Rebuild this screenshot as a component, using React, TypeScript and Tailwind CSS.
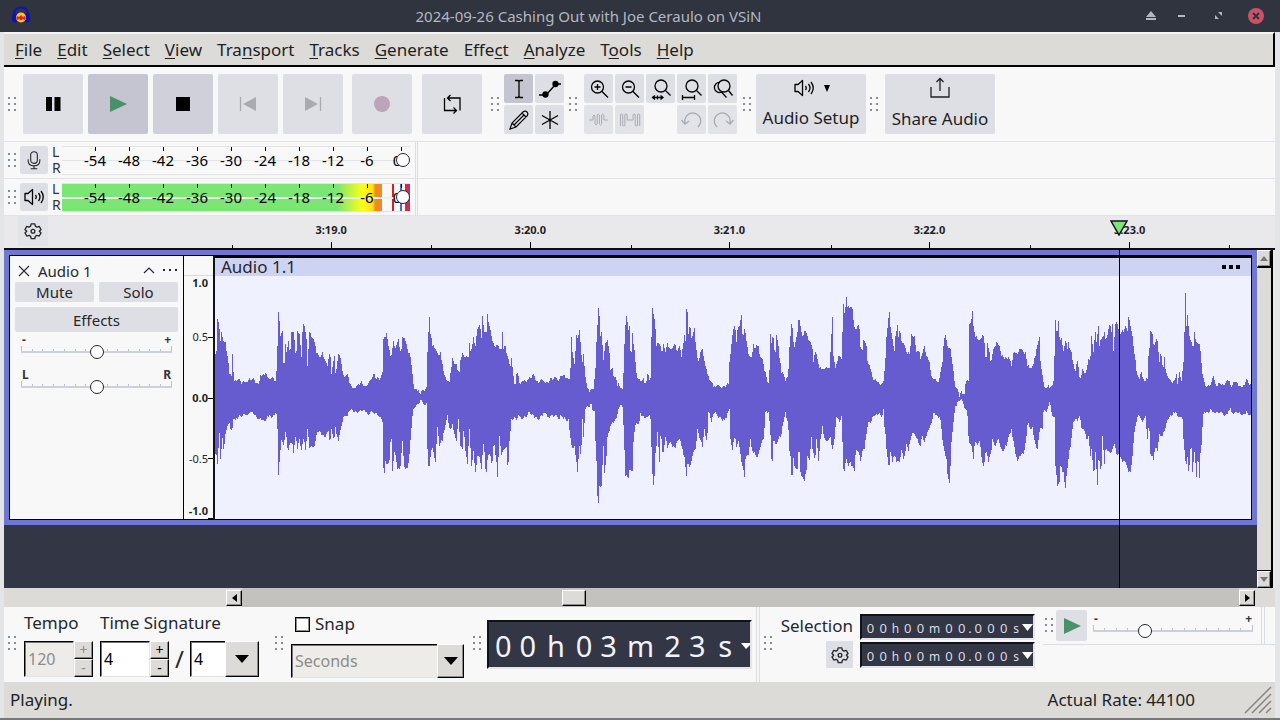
import type { ReactNode } from "react";

type Section = { x: number; y: number; top: string; bottom: string };

// Peak outlines of the clip, three units to a pixel.
const sections: Section[] = [
  {
    x: 0,
    y: 0,
    top: "14,235 18,340 22,210 28,240 32,275 35,250 40,275 46,280 52,320 58,375 64,382 67,315 70,370 74,395 85,390 95,405 108,398 120,388 135,396 145,405 152,378 165,380 168,365 171,382 185,388 198,395 202,290 206,190 209,215 212,260 217,245 222,360 226,285 230,308 236,275 240,310 245,250 252,250 258,328 262,245 268,255 275,325 277,250 282,222 288,255 293,350 298,250 305,265 312,270 320,312 330,325 337,310 345,330 352,350 360,312 365,375 373,320 378,380 385,315 390,320 396,358 405,385 412,375 420,405 432,415 445,405 455,395 465,410 480,398 490,375 500,390 512,388 517,370 519,272 530,253 536,290 543,328 550,275 557,298 565,270 573,308 578,265 585,268 592,300 600,312 606,360 612,420 622,425 632,435 640,422 649,415 651,330 655,250 657,185 661,255 667,290 675,300 685,318 692,310 698,345 705,380 718,398 724,355 727,328 733,345 740,345 748,370 753,328 758,312 775,325 778,282 783,310 790,265 797,290 803,240 810,228 814,268 818,200 824,250 829,250 832,195 838,232 845,260 855,295 865,290 874,300 877,250 880,300 887,290 895,330 902,350 905,328 910,380 915,410 920,375 926,380 930,408 940,395 955,390 968,378 980,395 1000,395 1012,398 1025,388 1050,390",
    bottom: "14,640 18,608 22,645 28,552 32,630 37,568 42,605 48,545 58,522 66,545 70,510 80,508 90,498 105,498 120,490 135,500 150,508 160,512 175,505 190,498 200,495 203,540 206,678 211,602 216,570 222,590 228,540 234,612 240,580 246,578 251,612 256,565 262,600 268,570 274,602 280,570 286,602 292,540 298,597 306,590 315,590 322,548 332,550 345,565 355,545 360,577 365,540 372,570 377,535 386,577 393,540 402,495 412,500 420,485 435,488 455,485 470,490 490,492 505,500 517,518 522,680 527,635 533,645 540,630 543,538 547,665 555,605 562,660 572,650 577,575 583,655 594,658 600,600 607,500 612,475 622,465 632,452 640,465 649,462 652,600 657,658 662,625 669,595 676,640 682,535 688,590 697,575 705,540 713,497 720,540 728,525 734,555 740,575 746,510 752,590 757,600 762,538 768,620 773,645 778,540 784,650 790,605 797,670 803,620 808,625 815,660 822,575 828,685 834,615 840,610 846,655 852,570 858,630 863,685 869,560 875,618 883,600 890,595 894,665 898,575 905,510 920,512 930,500 940,508 955,490 965,498 975,508 988,510 1000,492 1015,505 1035,500 1050,510",
  },
  {
    x: 1050,
    y: 0,
    top: "0,382 10,378 18,388 28,390 31,358 35,263 38,310 43,345 49,258 54,268 60,240 63,312 68,340 71,315 76,385 82,418 92,424 100,420 105,385 109,280 115,178 119,200 122,260 125,250 131,332 136,283 143,272 148,312 153,372 156,350 161,382 168,385 172,412 176,402 183,420 189,422 192,330 195,245 201,187 204,245 209,232 213,330 217,252 222,290 226,340 234,390 243,398 250,388 258,402 262,375 268,392 273,385 275,265 278,178 282,200 286,240 290,290 300,285 306,310 311,285 316,308 323,283 330,298 340,292 347,287 353,305 358,292 365,325 369,292 373,258 376,275 379,180 383,190 387,275 390,200 393,268 398,262 404,238 408,290 414,340 422,310 428,300 436,350 445,380 455,400 465,412 480,412 495,415 506,405 510,320 515,285 521,240 525,228 529,280 534,235 539,232 544,197 549,265 553,240 560,275 567,322 575,325 581,285 587,298 595,292 602,325 607,330 613,365 620,385 627,402 630,330 632,255 636,290 639,240 645,320 650,258 655,290 660,335 665,372 671,375 676,395 684,385 688,295 692,262 696,215 699,255 702,300 708,270 712,250 717,208 722,230 728,260 735,243 742,262 748,275 756,290 761,340 768,305 775,345 783,355 795,360 808,358 812,310 817,205 821,320 826,358 832,335 837,320 846,335 849,180 852,155 855,220 858,137 863,175 870,178 877,180 883,235 890,240 897,228 902,295 907,302 912,270 919,292 923,335 932,360 938,385 950,395 960,408 970,395 975,360 981,230 984,245 987,178 992,235 997,270 1003,305 1007,262 1012,228 1016,265 1020,240 1026,285 1032,280 1040,308 1050,315",
    bottom: "0,500 10,510 25,510 30,550 36,597 44,590 50,640 53,670 58,590 63,618 67,510 71,565 76,480 85,475 93,462 98,482 104,485 108,600 112,740 115,763 118,710 125,710 130,590 134,672 138,640 142,565 148,545 158,520 168,510 174,485 183,470 189,478 192,575 196,680 205,688 210,660 217,665 222,565 228,520 237,522 242,492 255,510 265,500 272,510 276,620 279,718 283,680 288,600 293,548 298,640 303,548 309,625 316,565 323,598 330,578 337,595 347,598 358,570 368,600 374,625 379,680 384,640 390,655 398,620 406,600 412,540 420,568 428,595 434,540 441,575 445,490 455,518 465,490 478,505 490,510 500,508 508,480 512,570 518,603 525,565 530,595 536,575 541,615 545,640 549,655 553,685 558,620 565,618 571,570 577,605 585,610 592,625 600,600 610,570 616,490 625,490 630,520 636,660 640,575 648,588 658,560 664,555 670,520 677,490 684,520 688,605 692,620 696,697 700,628 708,660 713,660 717,595 722,670 728,685 733,697 738,670 743,622 748,632 754,565 758,600 765,630 770,570 776,635 782,570 788,530 795,570 805,572 812,565 818,600 824,570 830,505 840,520 846,495 849,655 855,670 858,620 865,650 872,640 878,652 884,665 888,605 895,610 901,637 907,605 913,600 918,570 925,520 935,515 945,500 957,490 966,505 970,480 975,545 980,600 987,657 992,610 998,638 1005,620 1010,640 1018,640 1026,600 1032,635 1040,585 1046,605 1050,580",
  },
  {
    x: 2100,
    y: -120,
    top: "0,420 5,375 14,380 20,430 28,430 32,450 38,432 44,412 50,440 58,460 66,505 75,508 85,518 91,490 97,460 101,410 107,378 112,410 121,420 127,465 134,515 142,540 148,565 155,545 163,555 168,520 175,515 177,345 183,340 187,307 191,350 196,385 205,392 212,390 222,380 228,460 232,402 238,430 243,460 249,425 260,400 268,412 275,440 283,450 295,445 305,470 312,425 322,435 332,420 340,428 347,430 352,470 360,477 370,465 376,440 380,420 388,385 393,470 400,520 408,538 416,528 424,532 431,515 434,440 437,332 441,375 445,337 449,385 455,388 461,425 466,395 472,420 476,400 484,430 490,465 497,485 504,455 510,515 518,480 528,490 535,450 540,455 545,380 550,430 556,368 560,400 565,350 569,410 577,385 584,370 588,395 596,360 600,345 604,370 608,345 611,425 616,345 622,345 628,370 640,370 647,350 652,365 656,325 662,350 668,380 672,420 680,485 688,510 695,490 703,515 712,510 717,430 722,365 727,375 732,410 738,390 743,395 748,460 753,430 759,480 764,445 768,490 777,510 785,518 792,515 800,495 803,525 808,490 815,515 822,450 824,370 826,253 829,350 833,318 838,380 843,395 849,420 854,370 860,400 868,405 873,430 876,490 882,515 888,535 898,530 910,500 920,530 930,520 942,530 955,515 965,535 975,520 990,530 1000,528 1010,510 1023,525",
    bottom: "0,695 5,680 15,675 22,690 31,710 38,680 44,700 50,680 58,658 66,640 72,605 82,620 90,625 95,660 102,715 109,750 113,795 118,822 122,770 126,680 130,640 137,590 148,575 158,575 168,600 173,620 177,700 185,710 191,750 195,700 203,708 208,695 214,745 222,773 228,720 235,760 243,735 247,690 258,710 265,690 278,725 290,710 305,660 312,700 323,755 330,740 340,735 348,700 354,630 362,660 368,655 376,705 383,720 390,660 397,660 402,600 410,610 420,575 426,620 433,625 437,770 443,832 448,820 452,770 458,790 462,790 465,845 470,800 476,750 483,710 490,640 498,628 503,635 508,620 516,660 525,670 530,690 536,680 541,740 545,720 552,795 557,730 562,827 567,740 573,790 578,680 583,765 588,715 597,725 605,730 613,705 620,735 628,735 635,750 645,755 655,790 662,790 668,740 675,660 682,625 690,620 698,640 706,620 712,690 717,650 722,735 731,752 738,715 743,725 748,675 757,680 765,665 775,630 785,620 795,612 808,625 817,630 822,700 828,770 833,745 837,798 843,700 848,790 853,730 860,805 864,740 868,808 873,720 878,655 882,605 895,612 903,598 915,615 930,610 945,620 962,598 970,615 985,612 1000,615 1010,605 1023,618",
  },
];

const menus = [
  ["", "F", "ile"],
  ["", "E", "dit"],
  ["", "S", "elect"],
  ["", "V", "iew"],
  ["Tra", "n", "sport"],
  ["", "T", "racks"],
  ["", "G", "enerate"],
  ["Effe", "c", "t"],
  ["", "A", "nalyze"],
  ["T", "o", "ols"],
  ["", "H", "elp"],
];

const levels = ["-54", "-48", "-42", "-36", "-30", "-24", "-18", "-12", "-6", "0"];

const times = [
  { label: "3:19.0", at: 11.3 },
  { label: "3:20.0", at: 30.5 },
  { label: "3:21.0", at: 49.7 },
  { label: "3:22.0", at: 69 },
  { label: "3:23.0", at: 88.3 },
];
const halfTimes = [1.7, 20.9, 40.2, 59.5, 78.7, 97.9];

const amplitudes = [
  { label: "1.0", at: 3, strong: true },
  { label: "0.5", at: 25.3, strong: false },
  { label: "0.0", at: 50.2, strong: true },
  { label: "-0.5", at: 75.3, strong: false },
  { label: "-1.0", at: 96.7, strong: true },
];

const raised = "border border-t-white border-l-white border-r-black border-b-black bg-[#dcdbd8] shadow-[inset_-1px_-1px_0_#8d8c89]";
const sunken = "border border-t-black border-l-black border-r-[#e4e3e0] border-b-[#e4e3e0] shadow-[inset_1px_1px_0_#77767a]";
const thumb =
  "appearance-none bg-transparent [&::-webkit-slider-thumb]:h-[14px] [&::-webkit-slider-thumb]:w-[14px] [&::-webkit-slider-thumb]:appearance-none [&::-webkit-slider-thumb]:rounded-full [&::-webkit-slider-thumb]:border-[1.5px] [&::-webkit-slider-thumb]:border-solid [&::-webkit-slider-thumb]:border-[#22242b] [&::-webkit-slider-thumb]:bg-white";

function Icon({ size, view, children, className = "" }: { size: number; view: number; children: ReactNode; className?: string }) {
  return (
    <svg width={size} height={size} viewBox={`0 0 ${view} ${view}`} fill="none" stroke="currentColor" strokeWidth="1.3" className={`shrink-0 ${className}`} aria-hidden="true">
      {children}
    </svg>
  );
}

function Grip({ className = "mx-1" }: { className?: string }) {
  return (
    <svg width="11" height="16" viewBox="0 0 11 16" fill="#8b8c91" className={`shrink-0 ${className}`} aria-hidden="true">
      {[1, 7, 13].map((y) => (
        <g key={y}>
          <rect x="0" y={y} width="2" height="2" />
          <rect x="6" y={y} width="2" height="2" />
        </g>
      ))}
    </svg>
  );
}

function BigButton({ label, tone = "bg-[#dedfe4]", className = "", children }: { label: string; tone?: string; className?: string; children: ReactNode }) {
  return (
    <button aria-label={label} className={`flex h-[60px] w-[60px] shrink-0 items-center justify-center rounded-xs ${tone} ${className}`}>
      <Icon size={24} view={24}>{children}</Icon>
    </button>
  );
}

function SmallButton({ label, tone = "bg-[#dedfe4] text-black", children }: { label: string; tone?: string; children: ReactNode }) {
  return (
    <button aria-label={label} className={`flex h-[29px] w-[29px] items-center justify-center rounded-xs ${tone}`}>
      <Icon size={24} view={24}>{children}</Icon>
    </button>
  );
}

function SpeakerIcon() {
  return (
    <Icon size={24} view={24}>
      <path d="M3 8.500h3L10.500 4.500v15L6 15.500H3z" strokeLinejoin="round" />
      <path d="M13.500 10q1.500 2 0 4M16.500 8q3 4 0 8M19 6q4.500 6 0 12" />
    </Icon>
  );
}

function GearIcon() {
  return (
    <Icon size={18} view={24} className="text-[#25272d]">
      <path strokeWidth="1.8" strokeLinejoin="round" d="M9.600 2.500h4.800l.8 3.100 2 1.200 3.100-.9 2.400 4.100-2.300 2.300 0 0 2.300 2.300-2.400 4.100-3.100-.9-2 1.200-.8 3.100H9.600l-.8-3.100-2-1.200-3.100.9-2.400-4.100 2.300-2.300-2.300-2.300 2.400-4.100 3.100.9 2-1.200z" />
      <circle cx="12" cy="12.300" r="2.500" strokeWidth="1.800" />
    </Icon>
  );
}

function Meter({ name, icon, playing }: { name: string; icon: ReactNode; playing?: boolean }) {
  return (
    <div className="flex h-[37px] items-center border-b border-[#e3e3e6]">
      <div className="flex h-full w-[412px] items-center border-r border-[#dcdde0]">
        <Grip className="mr-px ml-1" />
        <button aria-label={name} className="flex h-7 w-7 shrink-0 items-center justify-center rounded-xs bg-[#dedfe4]">{icon}</button>
        <div className="flex w-[14px] shrink-0 flex-col pl-1 text-sm leading-4 text-[#33353c]"><span>L</span><span>R</span></div>
        <div className="relative h-[29px] flex-1 border-y border-[#e3e3e6]">
          {playing && <div className="absolute inset-y-0 left-0 w-[92%] bg-[linear-gradient(to_right,#7be673_0,#7be673_86%,#ffff14_94%,#ffe01a_97%,#f18a1e_98%,#f18a1e_100%)]" />}
          {playing && <div className="absolute inset-y-0 right-0 flex w-[18px]"><i className="w-[2px] bg-[#e01b1b]" /><i className="ml-[6px] w-[2px] bg-[#5a68c8]" /><i className="ml-[3px] flex-1 bg-[#d02a5c]" /></div>}
          <div className={`absolute inset-x-0 top-[13px] ${playing ? "h-[2px] bg-[#e9f3ea]" : "h-px bg-[#e3e3e6]"}`} />
          <div className="absolute inset-y-0 left-4 flex text-[15px] leading-[26px] text-black">
            {levels.map((level) => (
              <span key={level} className={`relative text-center before:absolute before:top-0 before:left-[17px] before:h-1 before:w-px before:bg-black ${level === "0" ? "w-[26px]" : "w-[34px]"}`}>{level}</span>
            ))}
          </div>
          <input type="range" aria-label={`${name} volume`} defaultValue={100} className={`absolute inset-0 h-full w-full ${thumb}`} />
        </div>
        <div className="w-[5px] shrink-0" />
      </div>
      <div className="h-full w-[2px] border-r border-[#dcdde0]" />
    </div>
  );
}

function TickSlider({ label, left, right, value, className = "" }: { label: string; left: string; right: string; value: number; className?: string }) {
  return (
    <div className={className}>
      <div className="flex justify-between px-px text-xs leading-3 font-bold text-[#33353c]"><span>{left}</span><span>{right}</span></div>
      <div className="relative h-4">
        <div className="flex h-[7px] items-end justify-between border-b-2 border-[#ccd0d9]">
          {Array.from({ length: 15 }, (_, i) => (
            <i key={i} className={i === 0 || i === 14 ? "h-[5px] w-px bg-[#b9bfcb]" : "h-[2px] w-px bg-[#b9bfcb]"} />
          ))}
        </div>
        <input type="range" aria-label={label} defaultValue={value} className={`absolute inset-x-0 -top-px h-[14px] w-full ${thumb}`} />
      </div>
    </div>
  );
}

function Stepper({ label, value, disabled }: { label: string; value: string; disabled?: boolean }) {
  return (
    <div className="flex h-9 w-[69px]">
      <input aria-label={label} defaultValue={value} disabled={disabled} className={`w-[50px] px-[3px] text-base outline-none ${sunken} ${disabled ? "bg-[#edece9] text-[#8c8c8a]" : "bg-white text-black"}`} />
      <div className={`flex w-[19px] flex-col text-sm ${disabled ? "text-[#8c8c8a]" : "text-black"}`}>
        <button disabled={disabled} className={`flex-1 leading-3 ${raised}`}>+</button>
        <button disabled={disabled} className={`flex-1 leading-3 ${raised}`}>-</button>
      </div>
    </div>
  );
}

function DropDown({ label, option, disabled, className, arrow }: { label: string; option: string; disabled?: boolean; className: string; arrow: string }) {
  return (
    <div className={`flex ${className}`}>
      <div className="grid flex-1 grid-cols-[1fr_auto]">
        <select aria-label={label} disabled={disabled} className={`col-span-2 col-start-1 row-start-1 appearance-none px-[3px] text-base opacity-100 outline-none ${sunken} ${disabled ? "bg-[#edece9] text-[#8c8c8a]" : "bg-white text-black"}`}>
          <option>{option}</option>
        </select>
        <span className={`pointer-events-none col-start-2 row-start-1 flex items-center justify-center ${raised} ${arrow}`}>
          <svg width="14" height="8" viewBox="0 0 14 8" aria-hidden="true"><path d="M0 0h14L7 8z" /></svg>
        </span>
      </div>
    </div>
  );
}

function SelectionTime({ label }: { label: string }) {
  return (
    <div aria-label={label} className="flex h-[26px] w-[175px] items-center border-2 border-[#101218] border-r-[#e6e6e8] border-b-[#e6e6e8] bg-[#333645] pt-px pl-[2px] text-[13px] leading-5 text-[#d9dbe4]">
      {"00h00m00.000s".split("").map((c, i) => (
        <span key={i} className={c === "." ? "w-1 text-center" : /\d/.test(c) ? "w-[13px] text-center" : c === "m" ? "w-4 pt-[3px] text-center text-xs" : "w-3 pt-[3px] text-center text-xs"}>{c}</span>
      ))}
      <button aria-label={`${label} format`} className="ml-auto"><svg width="11" height="7" viewBox="0 0 11 7" fill="white"><path d="M0 0h11L5.500 7z" /></svg></button>
    </div>
  );
}

function TitleBar() {
  return (
    <header className="flex h-8 items-center bg-[#2f343f] text-[#b3b8c2]">
      <svg width="20" height="20" viewBox="0 0 20 20" className="ml-[11px]" aria-hidden="true">
        <path d="M3 12C2 5 5 1.500 10 1.500S18 5 17 12" fill="none" stroke="#1212c0" strokeWidth="2" />
        <ellipse cx="4" cy="12" rx="3" ry="4.500" fill="#1010b8" />
        <ellipse cx="16" cy="12" rx="3" ry="4.500" fill="#1010b8" />
        <circle cx="10" cy="11.500" r="5" fill="#f6c531" />
        <path d="M5 12l1.500-2 1.500 1 2-2 2 2 1.500-1 1.500 2-1.500 2-1.500-1-2 1.500-2-1.500-1.500 1z" fill="#e0281b" />
      </svg>
      <h1 className="flex-1 text-center text-[15px] leading-5">2024-09-26 Cashing Out with Joe Ceraulo on VSiN</h1>
      <div className="flex w-[134px] items-center gap-5">
        <button aria-label="Shade"><svg width="10" height="10" viewBox="0 0 10 10" fill="currentColor"><path d="M5 0l5 6H0zM0 7h10v2H0z" /></svg></button>
        <button aria-label="Minimize" className="px-[2px]"><svg width="8" height="8" viewBox="0 0 8 8" fill="currentColor"><path d="M0 3h7v2H0z" /></svg></button>
        <button aria-label="Restore" className="pr-1 pl-[6px]"><svg width="10" height="8" viewBox="0 0 10 8" fill="currentColor"><path d="M4 0h4v4zM1 3v4h4z" /></svg></button>
        <button aria-label="Close"><svg width="16" height="16" viewBox="0 0 16 16"><circle cx="8" cy="8" r="8" fill="#cc5268" /><path d="M5 5l6 6M11 5l-6 6" stroke="#2f343f" strokeWidth="2" /></svg></button>
      </div>
    </header>
  );
}

function Toolbar() {
  const off = "text-[#a9abb2]";
  return (
    <div className="flex h-[75px] items-start border-b border-[#e3e3e6] pt-[7px]">
      <Grip className="mx-1 mt-[22px]" />
      <div className="flex gap-[5px]">
        <BigButton label="Pause" tone="bg-[#dedfe4] text-black"><path d="M5 5h6v14H5zM13.500 5h6v14h-6z" fill="currentColor" stroke="none" /></BigButton>
        <BigButton label="Play" tone="bg-[#c5c5d1] text-[#4b9069]"><path d="M4 4l17 8-17 8z" fill="currentColor" stroke="none" /></BigButton>
        <BigButton label="Stop" tone="bg-[#cfd0da] text-black"><path d="M5 5h14v14H5z" fill="currentColor" stroke="none" /></BigButton>
        <BigButton label="Skip to start" tone="bg-[#dedfe4] text-[#a9abb2]"><path d="M4.500 5v14" /><path d="M20 5v14L7 12z" fill="currentColor" stroke="none" /></BigButton>
        <BigButton label="Skip to end" tone="bg-[#dedfe4] text-[#a9abb2]"><path d="M19.500 5v14" /><path d="M4 5v14l13-7z" fill="currentColor" stroke="none" /></BigButton>
        <BigButton label="Record" tone="bg-[#dedfe4] text-[#bda4b8]" className="ml-1"><circle cx="12" cy="12" r="8" fill="currentColor" stroke="none" /></BigButton>
        <BigButton label="Loop" tone="bg-[#dedfe4] text-black" className="ml-[5px]">
          <path d="M4.500 6v12.500H16M13.500 15.500l3 3-3 3M20 18.500V6H8M10.500 3l-3 3 3 3" />
        </BigButton>
      </div>
      <Grip className="mt-[22px] mr-[2px] ml-[9px]" />
      <div className="grid grid-cols-2 gap-[2px]">
        <SmallButton label="Selection tool" tone="bg-[#c5c5d1] text-black"><path d="M8 3.500h3l1 1 1-1h3M8 20.500h3l1-1 1 1h3M12 4.500v15" /></SmallButton>
        <SmallButton label="Envelope tool"><path d="M1 18h7L18 7h5" /><circle cx="7.500" cy="17.500" r="2.500" fill="currentColor" /><circle cx="17.500" cy="7" r="2.500" fill="currentColor" /></SmallButton>
        <SmallButton label="Draw tool"><path d="M3 21l2-6L16.500 3.500q2-1 3.500.5t.5 3.500L9 19zM5 15l4 4M15 5l4 4M7 17L17 7" strokeWidth="1.200" /></SmallButton>
        <SmallButton label="Multi-tool"><path d="M12 3v18M4 7.500l16 9M4 16.500l16-9" /></SmallButton>
      </div>
      <Grip className="mt-[22px] mr-1 ml-[5px]" />
      <div className="grid grid-cols-5 gap-[2px]">
        <SmallButton label="Zoom in"><circle cx="10.500" cy="10" r="6" /><path d="M15 14.500l6 6M7.500 10h6M10.500 7v6" /></SmallButton>
        <SmallButton label="Zoom out"><circle cx="10.500" cy="10" r="6" /><path d="M15 14.500l6 6M7.500 10h6" /></SmallButton>
        <SmallButton label="Fit selection to width"><circle cx="12" cy="9" r="6" /><path d="M16.500 13.500l5 5M3 20.500h11M6 18.500l-2.500 2L6 22.500M11.500 18.500l2.500 2-2.500 2M8.500 18.500v4" /></SmallButton>
        <SmallButton label="Fit project to width"><circle cx="12" cy="9" r="6" /><path d="M16.500 13.500l5 5M2.500 20.500h12M2.500 18v5M14.500 18v5" /></SmallButton>
        <SmallButton label="Zoom toggle"><path d="M9 5.500A5 5 0 1 0 10.500 15l5 5.500" /><circle cx="13" cy="9" r="6" /><path d="M17.500 13.500l4 5" /></SmallButton>
        <SmallButton label="Trim outside" tone={`bg-[#e2e3e7] ${off}`}><path d="M2 12h4V8q1-2 2 0v8q1 2 2.200 0V7q1-2 2.200 0v9q1 2 2.200 0V7q1-2 2.200 0v5h4" strokeWidth="1" /></SmallButton>
        <SmallButton label="Silence selection" tone={`bg-[#e2e3e7] ${off}`}><path d="M2.500 18V6.500q1-1 2.200 0v11q1 1 2.200 0v-11q1-1 2.200 0V12h6V6.500q1-1 2.200 0v11q1 1 2.200 0v-11q1-1 2.200 0V18" strokeWidth="1" /></SmallButton>
        <span />
        <SmallButton label="Undo" tone={`bg-[#e2e3e7] ${off}`}><path d="M5 15a8 8 0 1 1 13 4M1.500 12L5 16l4-3" /></SmallButton>
        <SmallButton label="Redo" tone={`bg-[#e2e3e7] ${off}`}><path d="M19 15A8 8 0 1 0 6 19M22.500 12L19 16l-4-3" /></SmallButton>
      </div>
      <Grip className="mt-[22px] mr-[2px] ml-[6px]" />
      <button className="flex h-[60px] w-[110px] flex-col items-center justify-between rounded-xs bg-[#dedfe4] pt-[2px] pb-1 text-[#1d1f25]">
        <span className="flex items-center gap-2 text-black"><SpeakerIcon /><svg width="6" height="7" viewBox="0 0 6 7"><path d="M0 0h6L3 7z" /></svg></span>
        <span className="text-[17px] leading-6">Audio Setup</span>
      </button>
      <Grip className="mx-1 mt-[22px]" />
      <button className="flex h-[60px] w-[110px] flex-col items-center justify-between rounded-xs bg-[#dedfe4] pt-[2px] pb-[3px] text-[#1d1f25]">
        <Icon size={24} view={24}><path d="M3 11v10h18V11M12 15V3M8.500 6L12 2.500 15.500 6" /></Icon>
        <span className="text-[17px] leading-6">Share Audio</span>
      </button>
    </div>
  );
}

function Ruler() {
  return (
    <div className="flex h-[34px] border-b-2 border-[#0c0d14] bg-[#e9e9ec]">
      <div className="flex w-[210px] items-start pl-[14px]">
        <button aria-label="Timeline options" className="flex h-[30px] w-[30px] items-center justify-center bg-[#e2e3e8]"><GearIcon /></button>
      </div>
      <div className="relative mr-6 flex-1 text-[11px] leading-4 font-bold text-[#1d1f25]">
        {times.map((time) => (
          <div key={time.label} className="absolute inset-y-0 flex w-10 -translate-x-1/2 flex-col items-center justify-between pt-[6px]" style={{ left: `${time.at}%` }}>
            <span>{time.label}</span>
            <i className="h-[6px] w-px bg-black" />
          </div>
        ))}
        {halfTimes.map((at) => <i key={at} className="absolute bottom-0 h-[3px] w-px bg-black" style={{ left: `${at}%` }} />)}
        <svg width="18" height="16" viewBox="0 0 18 16" className="absolute top-[4px] left-[87.300%] -translate-x-1/2" aria-hidden="true"><path d="M1 1h16L9 15z" fill="#7be673" stroke="#101218" strokeWidth="1.500" /></svg>
      </div>
    </div>
  );
}

function TrackPanel() {
  return (
    <div className="flex w-[174px] shrink-0 flex-col border-r border-black bg-[#f8f8f8] px-[5px] pt-1 text-[15px] text-[#25272d]">
      <div className="flex h-[21px] items-center">
        <button aria-label="Close track" className="ml-[3px]"><Icon size={12} view={12}><path d="M1 1l10 10M11 1L1 11" strokeWidth="1.100" /></Icon></button>
        <span className="ml-2 flex-1 leading-5">Audio 1</span>
        <button aria-label="Collapse" className="mr-[7px]"><Icon size={12} view={12}><path d="M1 8l5-5 5 5" strokeWidth="1.200" /></Icon></button>
        <button aria-label="Track menu"><Icon size={16} view={16}><path d="M1 7h2M7 7h2M13 7h2" strokeWidth="2" /></Icon></button>
      </div>
      <div className="grid grid-cols-2 gap-[5px] pt-px">
        <button className="h-5 rounded-xs bg-[#dedfe4] leading-5">Mute</button>
        <button className="h-5 rounded-xs bg-[#dedfe4] leading-5">Solo</button>
      </div>
      <button className="mt-[5px] h-[25px] rounded-xs bg-[#dedfe4] leading-6">Effects</button>
      <TickSlider label="Gain" left="-" right="+" value={50} className="mt-[2px] px-[6px]" />
      <TickSlider label="Pan" left="L" right="R" value={50} className="mt-[7px] px-[6px]" />
    </div>
  );
}

// Turns an outline into flat-topped columns and roughens the quiet stretches.
function columns(outline: string) {
  const points = outline.split(" ").map((pair) => pair.split(",").map(Number));
  const out: number[][] = [];
  points.forEach(([x, y], i) => {
    out.push([x, y]);
    const next = points[i + 1];
    if (!next) return;
    const steps = Math.floor((next[0] - x) / 3);
    for (let step = 1; step < steps; step++) {
      const noise = Math.sin((x + step * 3) * 12.9 + y) * 6;
      out.push([x + step * 3, Math.round(y + ((next[1] - y) * step) / steps + noise)]);
    }
  });
  return out.map(([x, y]) => `${x - 1},${y} ${x + 1},${y}`).join(" ").split(" ");
}

function shape(section: Section) {
  return [...columns(section.top), ...columns(section.bottom).reverse()].join(" ");
}

function Clip() {
  return (
    <div className="flex min-w-0 flex-1 flex-col border-l-2 border-[#101218] bg-[#f0f1ff]">
      <div className="flex h-5 items-center border-t-2 border-black bg-[#cfd3f2] pl-[6px] text-[17px] text-[#25272d]">
        <span className="flex-1 leading-5">Audio 1.1</span>
        <button aria-label="Clip menu" className="mr-[11px]"><svg width="18" height="4" viewBox="0 0 18 4"><path d="M0 0h4v4H0zM7 0h4v4H7zM14 0h4v4h-4z" /></svg></button>
      </div>
      <svg viewBox="15 81 3108 729" preserveAspectRatio="none" className="min-h-0 w-full flex-1" role="img" aria-label="Waveform">
        {sections.map((section) => (
          <polygon key={section.x} points={shape(section)} transform={`translate(${section.x} ${section.y})`} fill="#665bcf" shapeRendering="crispEdges" />
        ))}
      </svg>
    </div>
  );
}

function Tracks() {
  return (
    <div className="flex min-h-[338px] flex-1">
      <div className="relative flex min-w-0 flex-1 flex-col bg-[#333645]">
        <div className="flex h-[275px] border-5 border-[#6e77d1]">
          <div className="flex min-w-0 flex-1 border border-black">
            <TrackPanel />
            <div className="relative mt-5 w-[29px] shrink-0 bg-[#f8f8f8] text-right text-[11px] leading-3 text-[#1d1f25] before:absolute before:inset-x-0 before:-top-5 before:h-5 before:border-b before:border-[#d9dade] before:bg-[#f8f8f8]">
              {amplitudes.map((mark) => (
                <span key={mark.label} className={`absolute right-[5px] -translate-y-1/2 ${mark.strong ? "font-bold" : ""}`} style={{ top: `${mark.at}%` }}>{mark.label}</span>
              ))}
              {[25, 50, 75, 99.6].map((at) => <i key={at} className="absolute right-0 h-px w-[5px] bg-black" style={{ top: `${at}%` }} />)}
            </div>
            <Clip />
          </div>
        </div>
        <div className="pointer-events-none absolute inset-y-0 right-[6px] left-[210px]"><i className="absolute inset-y-0 left-[87.300%] w-px bg-black" /></div>
      </div>
      <div className="flex w-4 flex-col border-r-2 border-black bg-[#dcdbd8]">
        <button aria-label="Scroll up" className={`flex h-[17px] items-center justify-center ${raised}`}><svg width="8" height="5" viewBox="0 0 8 5" fill="#777"><path d="M4 0l4 5H0z" /></svg></button>
        <div className="flex-1 border-t border-b border-black" />
        <button aria-label="Scroll down" className={`flex h-[17px] items-center justify-center ${raised}`}><svg width="8" height="5" viewBox="0 0 8 5" fill="#777"><path d="M4 5l4-5H0z" /></svg></button>
      </div>
      <div className="w-[2px] bg-[#e9e9ec]" />
    </div>
  );
}

function ScrollBar() {
  return (
    <div className="flex h-[19px] items-center bg-[#dcdbd8] pr-5 pl-[222px]">
      <button aria-label="Scroll left" className={`flex h-4 w-4 items-center justify-center ${raised}`}><svg width="5" height="8" viewBox="0 0 5 8"><path d="M5 0v8L0 4z" /></svg></button>
      <div className="flex h-full flex-1 items-center bg-[#c3c2bf]"><div className="w-[32.100%]" /><div className={`h-4 w-6 ${raised}`} /></div>
      <button aria-label="Scroll right" className={`flex h-4 w-4 items-center justify-center ${raised}`}><svg width="5" height="8" viewBox="0 0 5 8"><path d="M0 0v8l5-4z" /></svg></button>
    </div>
  );
}

function BottomBar() {
  return (
    <div className="flex h-[75px] items-start bg-[#f8f8f8] text-[17px] leading-6 text-[#25272d]">
      <Grip className="mx-1 mt-7" />
      <div className="mt-1 ml-[1px] w-[76px]">
        <div>Tempo</div>
        <div className="mt-[6px]"><Stepper label="Tempo" value="120" disabled /></div>
      </div>
      <div className="mt-1 w-[160px]">
        <div>Time Signature</div>
        <div className="mt-[6px] flex items-center">
          <Stepper label="Beats per measure" value="4" />
          <span className="w-[21px] text-center text-2xl leading-6">/</span>
          <DropDown label="Beat unit" option="4" className="h-9 w-[69px]" arrow="w-[34px]" />
        </div>
      </div>
      <Grip className="mt-7 mr-[5px] ml-[15px]" />
      <div className="mt-[5px] w-[173px]">
        <label className="flex items-center gap-[5px] pl-1 leading-6">
          <input type="checkbox" className="h-[15px] w-[15px] appearance-none border border-black bg-white shadow-[inset_0_0_0_1px_#8d8c89]" />
          Snap
        </label>
        <DropDown label="Snap to" option="Seconds" disabled className="mt-2 h-[34px]" arrow="w-[27px]" />
      </div>
      <Grip className="mt-7 mr-[3px] ml-[9px]" />
      <div aria-label="Audio position" className="mt-[13px] flex h-[49px] w-[265px] items-center border-2 border-[#101218] border-r-[#e6e6e8] border-b-[#e6e6e8] bg-[#333645] pt-[3px] pl-[2px] text-[29px] text-[#f2f3fa]">
        {"00h03m23s".split("").map((c, i) => (
          <span key={i} className={/\d/.test(c) ? "w-[25px] text-center" : c === "m" ? "w-10 text-center" : "w-8 text-center"}>{c}</span>
        ))}
        <button aria-label="Audio position format" className="ml-auto"><svg width="9" height="6" viewBox="0 0 9 6" fill="white"><path d="M0 0h9v2L5 6z" /></svg></button>
      </div>
      <div className="ml-1 h-full w-1 border-x border-[#dcdde0]" />
      <Grip className="mx-1 mt-7" />
      <div className="mt-[7px] ml-px flex w-[73px] flex-col items-end">
        <span>Selection</span>
        <button aria-label="Selection options" className="mt-[3px] flex h-[27px] w-[27px] items-center justify-center bg-[#dedfe4]"><GearIcon /></button>
      </div>
      <div className="mt-[7px] ml-[7px] flex flex-col gap-[2px]">
        <SelectionTime label="Selection start" />
        <SelectionTime label="Selection end" />
      </div>
      <div className="ml-2 flex h-[38px] flex-1 border-b border-[#dcdde0]">
        <Grip className="mt-[10px] ml-[2px]" />
        <button aria-label="Play at speed" className="mt-[3px] flex h-[31px] w-[31px] items-center justify-center rounded-xs bg-[#dedfe4] text-[#4b9069]"><Icon size={24} view={24}><path d="M4 4l17 8-17 8z" fill="currentColor" stroke="none" /></Icon></button>
        <TickSlider label="Playback speed" left="-" right="+" value={31} className="mt-[6px] ml-[6px] flex-1" />
        <div className="ml-2 w-1 border-x border-[#dcdde0]" />
        <div className="w-[10px]" />
      </div>
    </div>
  );
}

export default function App() {
  return (
    <div className="flex min-h-screen flex-col bg-[#e3e5e7] font-['Noto_Sans',sans-serif]">
      <TitleBar />
      <main className="mr-[5px] ml-1 flex flex-1 flex-col bg-[#f8f8f8]">
        <nav className="flex h-[35px] items-center gap-[15px] border-t-2 border-r-2 border-b-2 border-t-[#f4f4f2] border-r-black border-b-black bg-[#dcdbd7] pl-[11px] text-[17px] leading-6 text-[#1d1f25]">
          {menus.map(([before, key, after]) => (
            <button key={before + key + after}>{before}<span className="underline underline-offset-2">{key}</span>{after}</button>
          ))}
        </nav>
        <Toolbar />
        <Meter
          name="Record meter"
          icon={<Icon size={20} view={24} className="text-[#25272d]"><rect x="8" y="2" width="8" height="14" rx="4" /><path d="M5 11v2q0 6 7 6t7-6v-2M12 19v3M8 22.500h8" /></Icon>}
        />
        <Meter name="Playback meter" playing icon={<SpeakerIcon />} />
        <Ruler />
        <Tracks />
        <ScrollBar />
        <BottomBar />
        <footer className="flex h-9 items-center bg-[#dcdbd8] pr-[3px] pl-[6px] text-[17px] leading-6 text-[#1d1f25]">
          <span className="flex-1">Playing.</span>
          <span>Actual Rate: 44100</span>
          <svg width="28" height="28" viewBox="0 0 28 28" fill="none" stroke="#85847f" strokeWidth="1.500" className="ml-[49px]" aria-hidden="true"><path d="M1 27L27 1M8 27L27 8M15 27l12-12M22 27l5-5" /></svg>
        </footer>
      </main>
      <div className="h-[2px] bg-[#77787c]" />
    </div>
  );
}
